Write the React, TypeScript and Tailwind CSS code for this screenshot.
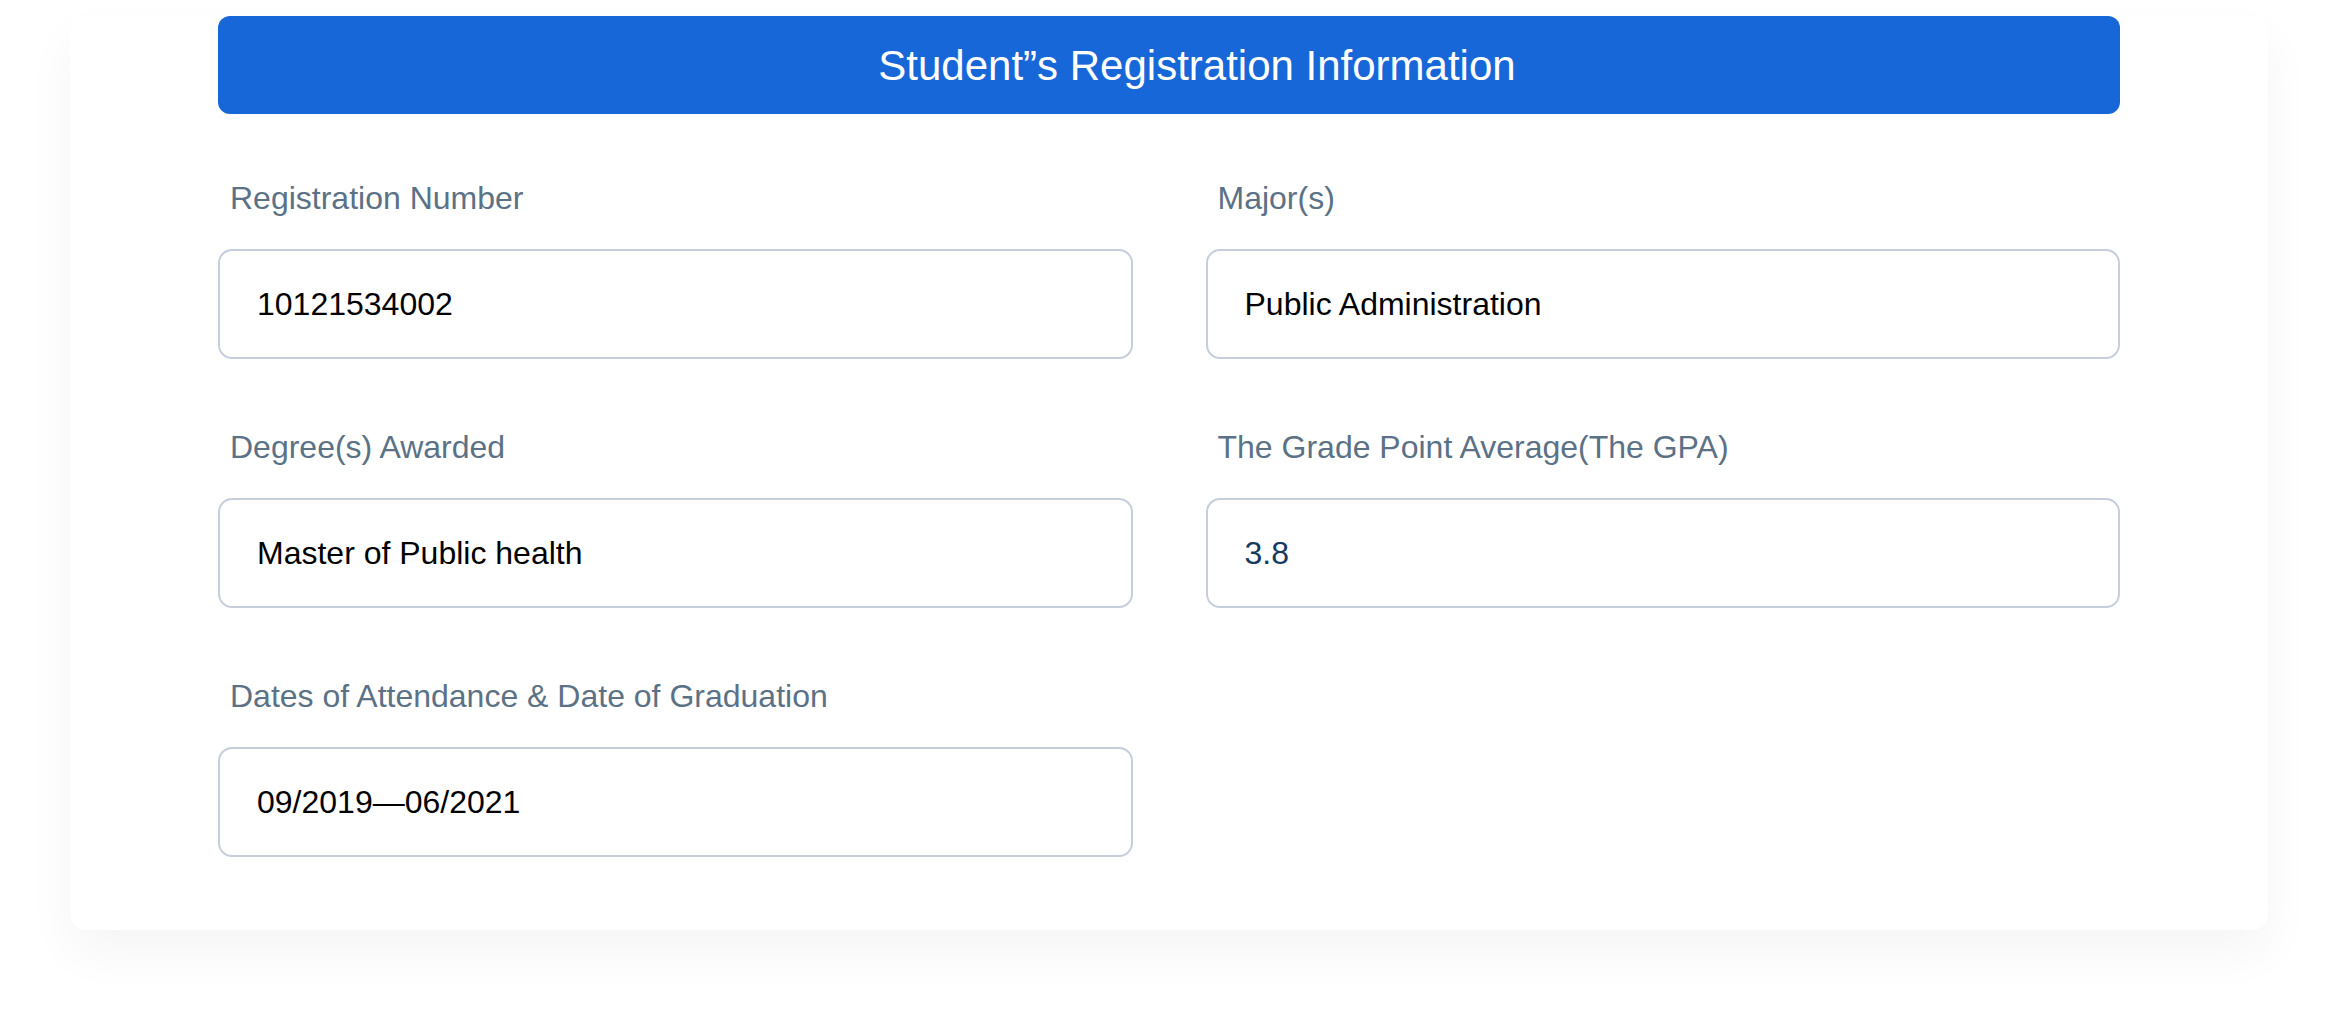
import React from 'react';

interface Field {
  label: string;
  value: string;
  valueClass?: string;
}

const fields: Field[] = [
  { label: 'Registration Number', value: '10121534002' },
  { label: 'Major(s)', value: 'Public Administration' },
  { label: 'Degree(s) Awarded', value: 'Master of Public health' },
  { label: 'The Grade Point Average(The GPA)', value: '3.8', valueClass: 'text-[#163a5f]' },
  { label: 'Dates of Attendance & Date of Graduation', value: '09/2019—06/2021' },
];

function InfoField({ label, value, valueClass }: Field) {
  return (
    <div className="flex flex-col">
      <label className="pl-[12px] h-[40px] leading-[40px] text-[32px] text-[#5b7186]">{label}</label>
      <div className="mt-[31px] h-[110px] rounded-[14px] border-2 border-[#c6cedc] bg-white flex items-center pl-[37px]">
        <span className={`text-[32px] leading-[40px] ${valueClass ?? 'text-black'}`}>{value}</span>
      </div>
    </div>
  );
}

export default function App() {
  return (
    <div className="min-h-[1020px] w-full bg-white pt-[45px] px-[70px] font-['Liberation_Sans',Arial,sans-serif]">
      <div className="rounded-2xl bg-white shadow-[0_22px_50px_rgba(0,0,0,0.045)] px-[148px] pb-[73px]">
        <div className="-mt-[29px] h-[98px] rounded-[12px] bg-[#1867d9] flex items-center justify-center pl-[56px]">
          <h1 className="text-[42px] text-white">Student”s Registration Information</h1>
        </div>
        <div className="mt-[64px] grid grid-cols-2 gap-x-[73px] gap-y-[68px]">
          {fields.map((f) => (
            <InfoField key={f.label} {...f} />
          ))}
        </div>
      </div>
    </div>
  );
}
